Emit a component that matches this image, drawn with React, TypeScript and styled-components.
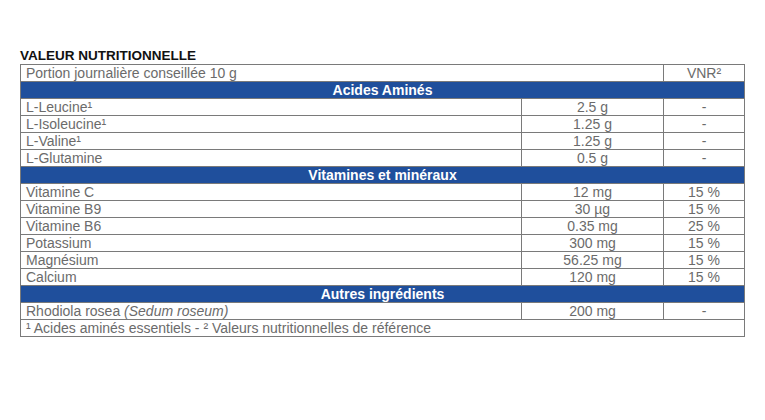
import React from 'react';
import styled, { createGlobalStyle } from 'styled-components';

type Row =
  | { kind: 'section'; title: string }
  | { kind: 'item'; name: React.ReactNode; amount: string; vnr: string };

const rows: Row[] = [
  { kind: 'section', title: 'Acides Aminés' },
  { kind: 'item', name: 'L-Leucine¹', amount: '2.5 g', vnr: '-' },
  { kind: 'item', name: 'L-Isoleucine¹', amount: '1.25 g', vnr: '-' },
  { kind: 'item', name: 'L-Valine¹', amount: '1.25 g', vnr: '-' },
  { kind: 'item', name: 'L-Glutamine', amount: '0.5 g', vnr: '-' },
  { kind: 'section', title: 'Vitamines et minéraux' },
  { kind: 'item', name: 'Vitamine C', amount: '12 mg', vnr: '15 %' },
  { kind: 'item', name: 'Vitamine B9', amount: '30 µg', vnr: '15 %' },
  { kind: 'item', name: 'Vitamine B6', amount: '0.35 mg', vnr: '25 %' },
  { kind: 'item', name: 'Potassium', amount: '300 mg', vnr: '15 %' },
  { kind: 'item', name: 'Magnésium', amount: '56.25 mg', vnr: '15 %' },
  { kind: 'item', name: 'Calcium', amount: '120 mg', vnr: '15 %' },
  { kind: 'section', title: 'Autres ingrédients' },
  {
    kind: 'item',
    name: (
      <>
        Rhodiola rosea <em>(Sedum roseum)</em>
      </>
    ),
    amount: '200 mg',
    vnr: '-',
  },
];

const GlobalStyle = createGlobalStyle`
  html, body {
    margin: 0;
    padding: 0;
    background: #ffffff;
  }
`;

const Page = styled.div`
  padding: 47px 20px 0 20px;
  font-family: 'Liberation Sans', Arial, sans-serif;
`;

const Title = styled.h2`
  margin: 0;
  font-size: 13.5px;
  line-height: 17px;
  font-weight: bold;
  color: #111;
`;

const Table = styled.table`
  width: 725px;
  border-collapse: collapse;
  font-size: 14px;
  color: #6b6b6b;
`;

const Cell = styled.td<{ $center?: boolean; $width?: number }>`
  border: 1px solid #7a7a7a;
  padding: 0 5px;
  height: 16px;
  line-height: 16px;
  white-space: nowrap;
  text-align: ${p => (p.$center ? 'center' : 'left')};
  width: ${p => (p.$width ? `${p.$width}px` : 'auto')};

  em {
    font-style: italic;
  }
`;

const SectionCell = styled.td`
  border: 1px solid #7a7a7a;
  background: #1f4f9c;
  color: #ffffff;
  font-weight: bold;
  text-align: center;
  height: 16px;
  line-height: 16px;
  padding: 0;
`;

export default function App() {
  return (
    <>
      <GlobalStyle />
      <Page>
        <Title>VALEUR NUTRITIONNELLE</Title>
        <Table>
          <tbody>
            <tr>
              <Cell colSpan={2}>Portion journalière conseillée 10 g</Cell>
              <Cell $center>VNR²</Cell>
            </tr>
            {rows.map((row, i) =>
              row.kind === 'section' ? (
                <tr key={i}>
                  <SectionCell colSpan={3}>{row.title}</SectionCell>
                </tr>
              ) : (
                <tr key={i}>
                  <Cell $width={490}>{row.name}</Cell>
                  <Cell $center $width={131}>{row.amount}</Cell>
                  <Cell $center>{row.vnr}</Cell>
                </tr>
              )
            )}
            <tr>
              <Cell colSpan={3}>
                ¹ Acides aminés essentiels - ² Valeurs nutritionnelles de référence
              </Cell>
            </tr>
          </tbody>
        </Table>
      </Page>
    </>
  );
}
